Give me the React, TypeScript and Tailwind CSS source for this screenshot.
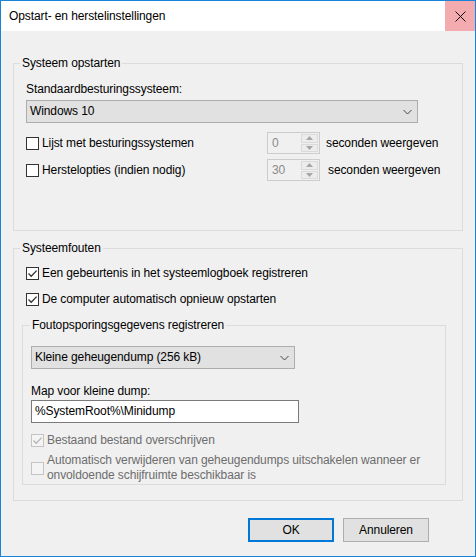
import React from 'react';

const font = "font-['Liberation_Sans',Arial,sans-serif] text-[12px] leading-[15px] tracking-[-0.1px]";

const Box = ({ checked = false, disabled = false }: { checked?: boolean; disabled?: boolean }) => (
  <span
    className={
      disabled
        ? 'w-[13px] h-[13px] border border-[#c4c4c4] bg-[#f4f4f4] flex items-center justify-center shrink-0'
        : 'w-[13px] h-[13px] border border-[#333333] bg-white flex items-center justify-center shrink-0'
    }
  >
    {checked && (
      <svg width="11" height="11" viewBox="0 0 11 11">
        <path d="M1.5 5.5 L4.2 8.2 L9.6 2.6" fill="none" stroke={disabled ? '#b5b5b5' : '#333333'} strokeWidth="1.3" />
      </svg>
    )}
  </span>
);

const Chevron = () => (
  <svg width="9" height="6" viewBox="0 0 9 6">
    <path d="M0.5 1 L4.5 5 L8.5 1" fill="none" stroke="#444444" strokeWidth="1" />
  </svg>
);

const Spinner = ({ value }: { value: string }) => (
  <div className="flex w-[53px] h-[22px] border border-[#cccccc] bg-[#f0f0f0]">
    <span className="flex-1 pl-[4px] leading-[20px] text-[#8a8a8a]">{value}</span>
    <div className="w-[18px] flex flex-col gap-[1px] py-[1px] pr-[1px]">
      <span className="flex-1 bg-[#ececec] border border-[#dadada] flex items-center justify-center">
        <svg width="7" height="4" viewBox="0 0 7 4"><path d="M0 4 L3.5 0 L7 4 Z" fill="#a6a6a6" /></svg>
      </span>
      <span className="flex-1 bg-[#ececec] border border-[#dadada] flex items-center justify-center">
        <svg width="7" height="4" viewBox="0 0 7 4"><path d="M0 0 L3.5 4 L7 0 Z" fill="#a6a6a6" /></svg>
      </span>
    </div>
  </div>
);

export default function App() {
  return (
    <div className={`${font} w-[476px] h-[557px] border border-[#1883d7] bg-[#f0f0f0] flex flex-col text-black`}>
      {/* title bar */}
      <div className="h-[30px] bg-white flex items-center shrink-0">
        <span className="pl-[8px] flex-1">Opstart- en herstelinstellingen</span>
        <button className="w-[30px] h-[30px] bg-[#f4abb0] flex items-center justify-center">
          <svg width="11" height="11" viewBox="0 0 11 11">
            <path d="M0.5 0.5 L10.5 10.5 M10.5 0.5 L0.5 10.5" stroke="#111111" strokeWidth="1" />
          </svg>
        </button>
      </div>

      <div className="flex-1 pt-[25px] px-[12px]">
        {/* Systeem opstarten */}
        <fieldset className="border border-[#dcdcdc] w-[450px] h-[175px]">
          <legend className="ml-[6px] px-[2px]">Systeem opstarten</legend>
          <div className="px-[12px]">
            <div className="mt-[11px]">Standaardbesturingssysteem:</div>
            <div className="mt-[3px] h-[23px] w-[392px] border border-[#adadad] bg-[#e1e1e1] flex items-center justify-between pl-[3px] pr-[5px]">
              <span>Windows 10</span>
              <Chevron />
            </div>
            <div className="mt-[9px] flex items-center">
              <label className="w-[241px] flex items-center gap-[3px]">
                <Box />
                <span>Lijst met besturingssystemen</span>
              </label>
              <Spinner value="0" />
              <span className="ml-[6px]">seconden weergeven</span>
            </div>
            <div className="mt-[5px] flex items-center">
              <label className="w-[241px] flex items-center gap-[3px]">
                <Box />
                <span>Herstelopties (indien nodig)</span>
              </label>
              <Spinner value="30" />
              <span className="ml-[8px]">seconden weergeven</span>
            </div>
          </div>
        </fieldset>

        {/* Systeemfouten */}
        <fieldset className="mt-[10px] border border-[#dcdcdc] w-[450px] h-[260px]">
          <legend className="ml-[6px] px-[2px]">Systeemfouten</legend>
          <div className="px-[12px]">
            <label className="mt-[10px] flex items-center gap-[3px]">
              <Box checked />
              <span>Een gebeurtenis in het systeemlogboek registreren</span>
            </label>
            <label className="mt-[11px] flex items-center gap-[3px]">
              <Box checked />
              <span>De computer automatisch opnieuw opstarten</span>
            </label>
          </div>

          <fieldset className="mt-[11px] ml-[8px] border border-[#dcdcdc] w-[424px] h-[167px]">
            <legend className="ml-[7px] px-[2px]">Foutopsporingsgegevens registreren</legend>
            <div className="px-[8px]">
              <div className="mt-[13px] h-[23px] w-[264px] border border-[#adadad] bg-[#e1e1e1] flex items-center justify-between pl-[3px] pr-[5px]">
                <span>Kleine geheugendump (256 kB)</span>
                <Chevron />
              </div>
              <div className="mt-[15px]">Map voor kleine dump:</div>
              <div className="mt-[1px] h-[23px] w-[268px] border border-[#7a7a7a] bg-white flex items-center pl-[3px]">
                %SystemRoot%\Minidump
              </div>
              <label className="mt-[10px] flex items-center gap-[3px] text-[#6d6d6d]">
                <Box checked disabled />
                <span>Bestaand bestand overschrijven</span>
              </label>
              <label className="mt-[5px] flex items-center gap-[3px] text-[#6d6d6d]">
                <Box disabled />
                <span>
                  Automatisch verwijderen van geheugendumps uitschakelen wanneer er
                  <br />
                  onvoldoende schijfruimte beschikbaar is
                </span>
              </label>
            </div>
          </fieldset>
        </fieldset>

        <div className="mt-[17px] flex justify-end gap-[9px] pr-[34px]">
          <button className="w-[86px] h-[24px] border-2 border-[#0078d7] bg-[#e1e1e1]">OK</button>
          <button className="w-[86px] h-[24px] border border-[#adadad] bg-[#e1e1e1]">Annuleren</button>
        </div>
      </div>
    </div>
  );
}
